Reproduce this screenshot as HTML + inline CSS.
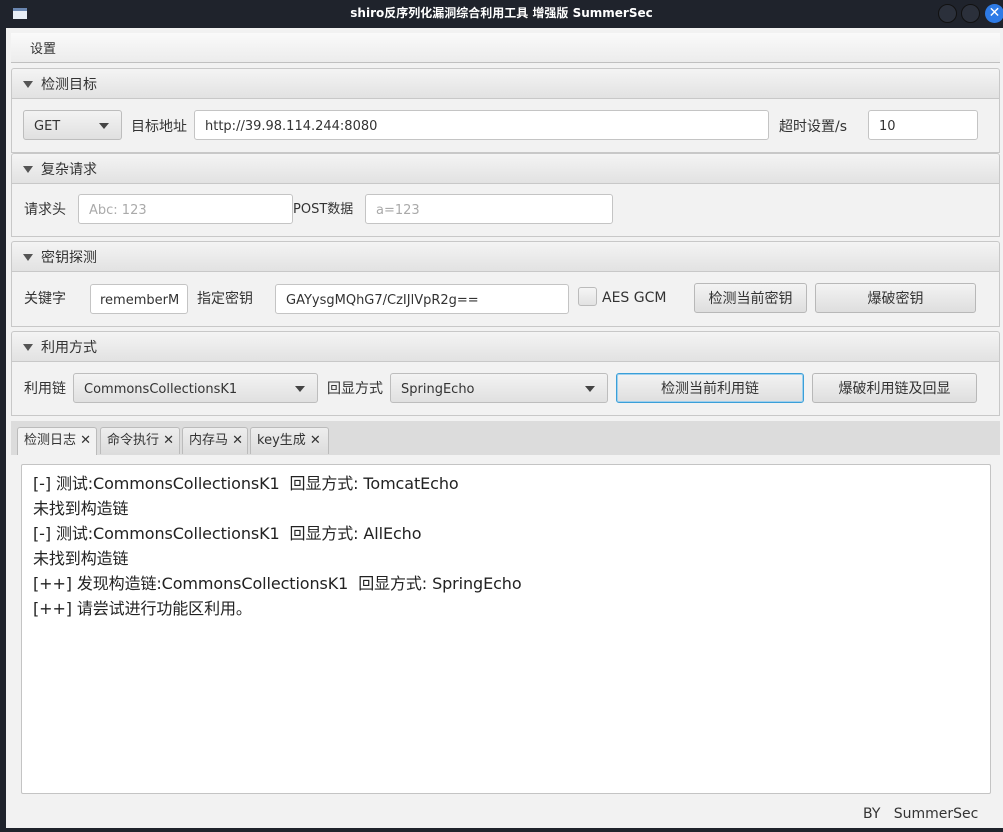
<!DOCTYPE html><html><head><meta charset="utf-8"><style>
*{box-sizing:border-box;margin:0;padding:0}
body{width:1003px;height:832px;overflow:hidden;background:#1f232c;font-family:"DejaVu Sans","Noto Sans CJK SC",sans-serif;font-size:14px;color:#333;position:relative}
.a{position:absolute}
.win{left:6px;top:28px;width:997px;height:800px;background:#f2f2f2}
.ttl{left:11px;width:989px;height:31px;border:1px solid #c8c8c8;border-radius:3px 3px 0 0;background:linear-gradient(#f4f4f4,#e2e2e2);padding-left:29px;padding-top:3px;line-height:26px;font-size:14px}
.ttl:before{content:"";position:absolute;left:11px;top:12px;border-left:5px solid transparent;border-right:5px solid transparent;border-top:7px solid #555}
.bd{left:11px;width:989px;border:1px solid #c8c8c8;border-top:none;background:#f2f2f2}
.in{background:#fff;border:1px solid #c4c4c4;border-radius:3px;height:30px;line-height:25px;padding-top:3px;padding-left:10px;font-size:13px;color:#333;white-space:nowrap;overflow:hidden}
.ph{color:#aaa}
.cb{background:linear-gradient(#f3f3f3,#e0e0e0);border:1px solid #bdbdbd;border-radius:3px;height:30px;line-height:25px;padding-top:3px;padding-left:10px;font-size:13px}
.cb:after{content:"";position:absolute;right:12px;top:12px;border-left:5px solid transparent;border-right:5px solid transparent;border-top:6px solid #444}
.bt{background:linear-gradient(#f3f3f3,#dedede);border:1px solid #b8b8b8;border-radius:3px;height:30px;line-height:26px;padding-top:2px;text-align:center}
.lb{line-height:20px;padding-top:2px}
.tab{top:427px;height:27px;border:1px solid #bbb;border-bottom:none;border-radius:3px 3px 0 0;background:linear-gradient(#eee,#dcdcdc);line-height:26px;padding-left:6px;font-size:13px;white-space:nowrap}
.log{left:21px;top:464px;width:970px;height:330px;background:#fff;border:1px solid #c4c4c4;border-radius:2px;padding:6px 11px;font-size:16px;line-height:25px;color:#222;letter-spacing:-0.1px}
</style></head><body>
<div class="a" style="left:13px;top:8px;width:14px;height:11px;background:#e8eef5;border-top:3px solid #6a86b0"></div>
<div class="a" style="left:0;top:5px;width:1003px;text-align:center;color:#fff;font-weight:bold;font-size:12px;line-height:16px">shiro反序列化漏洞综合利用工具 增强版 SummerSec</div>
<div class="a" style="left:938px;top:4px;width:19px;height:19px;border-radius:50%;background:#2b303b;border:1px solid #111"></div>
<div class="a" style="left:961px;top:4px;width:19px;height:19px;border-radius:50%;background:#2b303b;border:1px solid #111"></div>
<div class="a" style="left:985px;top:4px;width:19px;height:19px;border-radius:50%;background:#2e7be6;color:#fff;font-weight:bold;text-align:center;line-height:18px;font-size:14px">✕</div>
<div class="a win"></div>
<div class="a" style="left:11px;top:33px;width:989px;height:30px;background:linear-gradient(#fafafa,#ececec);border-bottom:1px solid #c0c0c0"></div>
<div class="a" style="left:30px;top:41px;font-size:13px;line-height:18px">设置</div>

<div class="a ttl" style="top:68px">检测目标</div>
<div class="a bd" style="top:99px;height:54px"></div>
<div class="a cb" style="left:23px;top:110px;width:99px">GET</div>
<div class="a lb" style="left:131px;top:115px">目标地址</div>
<div class="a in" style="left:194px;top:110px;width:575px">http://39.98.114.244:8080</div>
<div class="a lb" style="left:779px;top:115px">超时设置/s</div>
<div class="a in" style="left:868px;top:110px;width:110px">10</div>

<div class="a ttl" style="top:153px">复杂请求</div>
<div class="a bd" style="top:184px;height:53px"></div>
<div class="a lb" style="left:24px;top:198px">请求头</div>
<div class="a in ph" style="left:78px;top:194px;width:215px">Abc: 123</div>
<div class="a lb" style="left:293px;top:198px;font-size:13px">POST数据</div>
<div class="a in ph" style="left:365px;top:194px;width:248px">a=123</div>

<div class="a ttl" style="top:241px">密钥探测</div>
<div class="a bd" style="top:272px;height:55px"></div>
<div class="a lb" style="left:24px;top:287px">关键字</div>
<div class="a in" style="left:90px;top:284px;width:98px;padding-left:9px">rememberM</div>
<div class="a lb" style="left:197px;top:287px">指定密钥</div>
<div class="a in" style="left:275px;top:284px;width:294px">GAYysgMQhG7/CzIJlVpR2g==</div>
<div class="a" style="left:578px;top:287px;width:19px;height:19px;border:1px solid #bbb;border-radius:3px;background:linear-gradient(#f5f5f5,#e2e2e2)"></div>
<div class="a lb" style="left:602px;top:286px;font-size:14px">AES GCM</div>
<div class="a bt" style="left:694px;top:283px;width:113px">检测当前密钥</div>
<div class="a bt" style="left:815px;top:283px;width:161px">爆破密钥</div>

<div class="a ttl" style="top:331px">利用方式</div>
<div class="a bd" style="top:362px;height:54px"></div>
<div class="a lb" style="left:24px;top:377px">利用链</div>
<div class="a cb" style="left:73px;top:373px;width:245px">CommonsCollectionsK1</div>
<div class="a lb" style="left:327px;top:377px">回显方式</div>
<div class="a cb" style="left:390px;top:373px;width:218px">SpringEcho</div>
<div class="a bt" style="left:616px;top:373px;width:188px;border:1px solid #3a9fd8;box-shadow:0 0 0 1px #9fd0ee inset">检测当前利用链</div>
<div class="a bt" style="left:812px;top:373px;width:165px">爆破利用链及回显</div>

<div class="a" style="left:11px;top:421px;width:989px;height:34px;background:#dcdcdc"></div>
<div class="a tab" style="left:17px;width:80px;background:#f2f2f2;height:28px">检测日志 ✕</div>
<div class="a tab" style="left:100px;width:80px">命令执行 ✕</div>
<div class="a tab" style="left:182px;width:66px">内存马 ✕</div>
<div class="a tab" style="left:250px;width:79px">key生成 ✕</div>
<div class="a log">[-] 测试:CommonsCollectionsK1&nbsp; 回显方式: TomcatEcho<br>未找到构造链<br>[-] 测试:CommonsCollectionsK1&nbsp; 回显方式: AllEcho<br>未找到构造链<br>[++] 发现构造链:CommonsCollectionsK1&nbsp; 回显方式: SpringEcho<br>[++] 请尝试进行功能区利用。</div>
<div class="a" style="left:863px;top:805px;font-size:14px;line-height:18px">BY&nbsp;&nbsp; SummerSec</div>
</body></html>
